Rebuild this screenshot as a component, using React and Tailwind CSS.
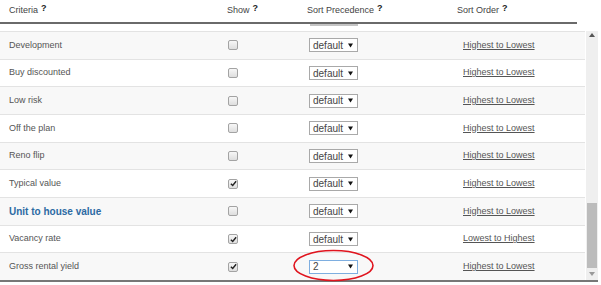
import React from 'react';

const rows = [
	{ name: 'Development', checked: false, prec: 'default', order: 'Highest to Lowest' },
	{ name: 'Buy discounted', checked: false, prec: 'default', order: 'Highest to Lowest' },
	{ name: 'Low risk', checked: false, prec: 'default', order: 'Highest to Lowest' },
	{ name: 'Off the plan', checked: false, prec: 'default', order: 'Highest to Lowest' },
	{ name: 'Reno flip', checked: false, prec: 'default', order: 'Highest to Lowest' },
	{ name: 'Typical value', checked: true, prec: 'default', order: 'Highest to Lowest' },
	{ name: 'Unit to house value', checked: false, prec: 'default', order: 'Highest to Lowest', bold: true },
	{ name: 'Vacancy rate', checked: true, prec: 'default', order: 'Lowest to Highest' },
	{ name: 'Gross rental yield', checked: true, prec: '2', order: 'Highest to Lowest', focus: true },
];

function Help() {
	return <span className="relative -top-[2px] ml-[3px] font-bold text-[9px] text-[#222]">?</span>;
}

function Checkbox({ checked }) {
	return (
		<span className="flex h-[10px] w-[10px] items-center justify-center rounded-[2px] border border-[#a3a3a3] bg-gradient-to-b from-[#f7f7f7] to-[#dedede]">
			{checked && (
				<svg width="7" height="7" viewBox="0 0 8 8">
					<path d="M1 4.2 L3.1 6.3 L7 1.5" fill="none" stroke="#222" strokeWidth="1.6" />
				</svg>
			)}
		</span>
	);
}

function FakeSelect({ value, focus }) {
	return (
		<div
			className={
				'flex h-[14px] w-[49px] items-center justify-between bg-white pl-[3px] pr-[4px] text-[10px] text-[#444] border ' +
				(focus ? 'border-[#7eaee0]' : 'border-[#a9a9a9]')
			}
		>
			<span>{value}</span>
			<svg width="5" height="5" viewBox="0 0 5 5"><path d="M0 0.5 L5 0.5 L2.5 4.5 Z" fill="#111" /></svg>
		</div>
	);
}

function App() {
	return (
		<div className="relative h-[285px] w-[601px] overflow-hidden bg-white font-['Liberation_Sans',Arial,sans-serif] text-[9px] text-[#555]">
			{/* header */}
			<div className="grid h-[22px] w-[577px] grid-cols-[227px_80px_150px_1fr] items-center text-[#444]">
				<div className="pl-[9px]">Criteria<Help /></div>
				<div>Show<Help /></div>
				<div>Sort Precedence<Help /></div>
				<div>Sort Order<Help /></div>
			</div>
			<div className="h-[2px] w-[577px] bg-[#6a6a6a]" />
			<div className="ml-[310px] h-[2px] w-[48px] bg-[#c4c4c4]" />
			<div className="h-[5px]" />

			{/* body */}
			<div className="flex h-[249px]">
				<div className="flex w-[585px] flex-col">
					{rows.map((r, i) => (
						<div
							key={r.name}
							className={
								'grid flex-1 grid-cols-[228px_81px_154px_1fr] items-center border-t border-[#e3e3e3] ' +
								(i % 2 === 0 ? 'bg-[#f8f8f8]' : 'bg-white')
							}
						>
							<div className={r.bold ? 'pl-[9px] text-[10px] font-bold text-[#2c6aa3]' : 'pl-[9px]'}>{r.name}</div>
							<div><Checkbox checked={r.checked} /></div>
							<div><FakeSelect value={r.prec} focus={r.focus} /></div>
							<div><span className="underline">{r.order}</span></div>
						</div>
					))}
				</div>
				<div className="ml-[1px] flex w-[12px] flex-col bg-[#efefef]">
					<div className="flex h-[8px] items-center justify-center">
						<svg width="6" height="4" viewBox="0 0 6 4"><path d="M0 4 L3 0 L6 4 Z" fill="#555" /></svg>
					</div>
					<div className="flex-1" />
					<div className="mx-[1px] h-[65px] bg-[#bcbcbc]" />
					<div className="flex h-[12px] items-center justify-center">
						<svg width="6" height="4" viewBox="0 0 6 4"><path d="M0 0 L3 4 L6 0 Z" fill="#999" /></svg>
					</div>
				</div>
			</div>
			<div className="h-[2px] w-[598px] bg-[#777]" />

			{/* annotation */}
			<svg className="absolute left-[292px] top-[249px]" width="83" height="34" viewBox="0 0 83 34">
				<ellipse cx="41.5" cy="16.5" rx="39.5" ry="15" fill="none" stroke="#e0141e" strokeWidth="1.6" />
			</svg>
		</div>
	);
}

export default App;
